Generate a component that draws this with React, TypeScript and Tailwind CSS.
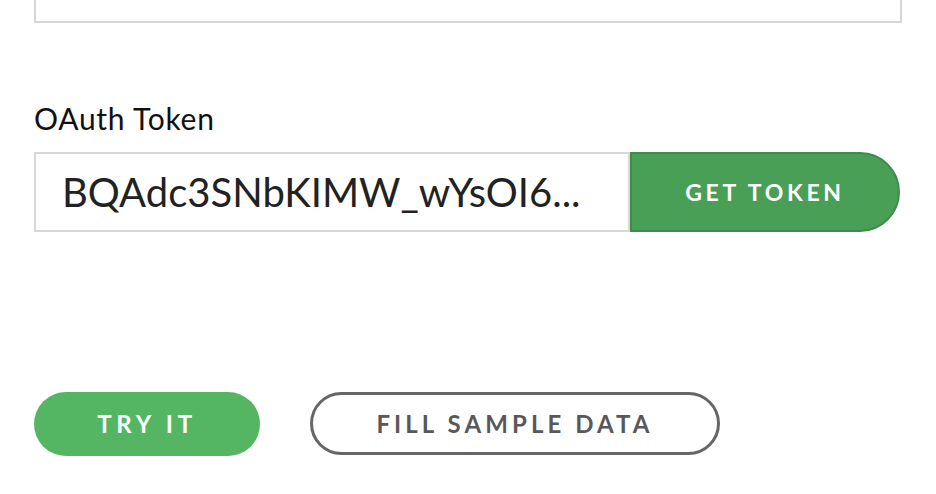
export default function App() {
  return (
    <div className="min-h-[494px] bg-white font-['Lato',_'Noto_Sans',_sans-serif] text-[#1a1a1a]">
      <div className="pl-[34px] w-[902px]">
        {/* bottom of the previous field */}
        <div className="h-[23px] border-2 border-t-0 border-[#d6d6d6]" />

        {/* OAuth token field */}
        <label className="block mt-[75px] text-[30px] leading-[40px] tracking-[0.025em] text-[#111]">
          OAuth Token
        </label>
        <div className="mt-[14px] flex h-[80px] w-[866px]">
          <div className="flex w-[596px] items-center overflow-hidden border-2 border-[#d8d8d8] pl-[26px] pr-4">
            <span className="whitespace-nowrap text-[40px] text-[#222]">
              BQAdc3SNbKIMW_wYsOI6...
            </span>
          </div>
          <button
            type="button"
            className="flex flex-1 items-center justify-center rounded-r-full border-2 border-[#3f8c49] bg-[#4a9f56] text-[23px] font-bold tracking-[0.16em] text-white"
          >
            GET TOKEN
          </button>
        </div>

        {/* actions */}
        <div className="mt-[160px] flex gap-[50px]">
          <button
            type="button"
            className="h-[64px] w-[226px] rounded-full bg-[#54b663] text-[24px] font-bold tracking-[0.2em] text-white"
          >
            TRY IT
          </button>
          <button
            type="button"
            className="h-[63px] w-[410px] rounded-full border-[3px] border-[#666666] bg-white text-[24px] font-bold tracking-[0.17em] text-[#58585a]"
          >
            FILL SAMPLE DATA
          </button>
        </div>
      </div>
    </div>
  );
}
